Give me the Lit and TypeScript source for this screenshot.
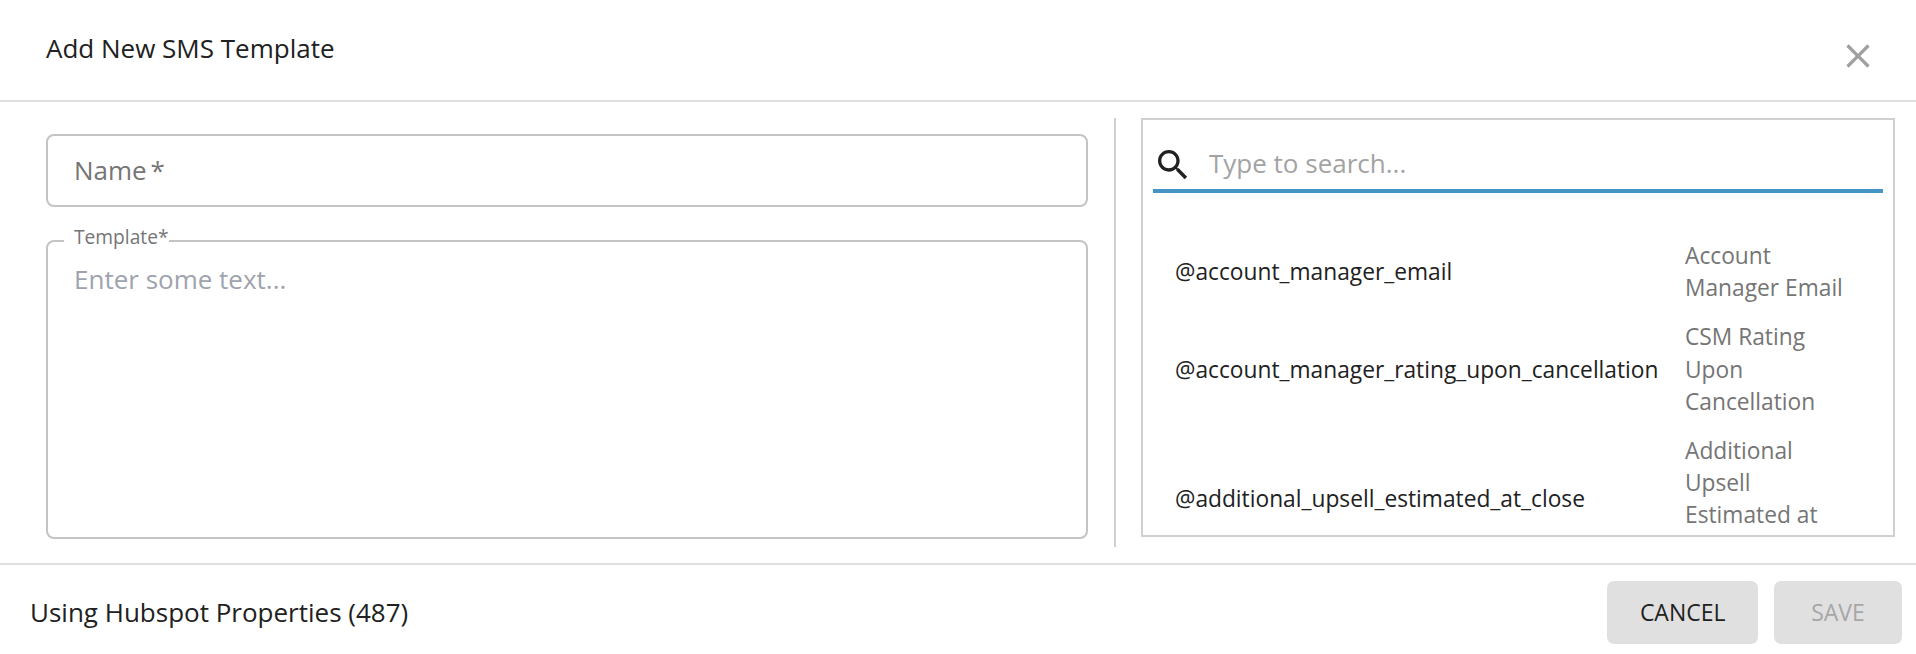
import { LitElement, html, css } from 'lit';
import { customElement } from 'lit/decorators.js';

const PROPERTIES = [
  { token: '@account_manager_email', label: 'Account Manager Email' },
  { token: '@account_manager_rating_upon_cancellation', label: 'CSM Rating Upon Cancellation' },
  { token: '@additional_upsell_estimated_at_close', label: 'Additional Upsell Estimated at Close' },
];

@customElement('app-root')
export class AppRoot extends LitElement {
  static override styles = css`
    :host {
      display: block;
      height: 654px;
      overflow: hidden;
      background: #fff;
      color: #212121;
      font-family: 'Open Sans', sans-serif;
    }

    .header {
      display: flex;
      justify-content: space-between;
      box-sizing: border-box;
      height: 102px;
      padding: 30px 38px 0 46px;
      border-bottom: 2px solid #e0e0e0;
    }

    .title {
      font-size: 26px;
      line-height: 36px;
    }

    .close {
      width: 40px;
      height: 40px;
      margin-top: 6px;
      fill: #a0a0a0;
    }

    .body {
      display: flex;
      box-sizing: border-box;
      height: 461px;
      padding: 16px 21px 0 46px;
    }

    .form {
      display: flex;
      flex-direction: column;
      gap: 19px;
      box-sizing: border-box;
      width: 1070px;
      height: 429px;
      padding: 16px 26px 0 0;
      border-right: 2px solid #d0d0d0;
    }

    .name {
      box-sizing: border-box;
      height: 73px;
      padding: 0 26px;
      border: 2px solid #c4c4c4;
      border-radius: 8px;
      color: #757575;
      font-size: 26px;
      line-height: 69px;
      word-spacing: -3px;
    }

    .template {
      box-sizing: border-box;
      height: 313px;
      margin: 0;
      min-width: 0;
      padding: 6px 26px 0;
      border: 2px solid #c4c4c4;
      border-radius: 8px;
    }

    .template legend {
      margin-left: -10px;
      padding: 0 0 7px 10px;
      color: #757575;
      font-size: 19.2px;
      line-height: 22px;
    }

    .placeholder {
      color: #9ea3ae;
      font-size: 26px;
      line-height: 36px;
    }

    .picker {
      box-sizing: border-box;
      width: 754px;
      height: 419px;
      margin-left: 25px;
      padding: 0 10px;
      overflow: hidden;
      border: 2px solid #d0d0d0;
    }

    .search {
      display: flex;
      align-items: center;
      gap: 16px;
      box-sizing: border-box;
      height: 73px;
      padding-top: 21px;
      border-bottom: 4px solid #4494c4;
    }

    .search svg {
      width: 40px;
      height: 40px;
      fill: #212121;
    }

    .search span {
      margin-bottom: 4px;
      color: #a3a3a3;
      font-size: 26px;
    }

    .rows {
      display: grid;
      grid-template-columns: 510px 170px;
      row-gap: 17px;
      padding: 47px 0 0 22px;
      font-size: 22.75px;
      line-height: 32.2px;
    }

    .token {
      align-self: center;
    }

    .label {
      color: #757575;
    }

    .footer {
      display: flex;
      align-items: center;
      justify-content: space-between;
      box-sizing: border-box;
      height: 91px;
      padding: 6px 14px 0 30px;
      border-top: 2px solid #e0e0e0;
    }

    .count {
      margin-bottom: 2px;
      font-size: 26px;
    }

    .actions {
      display: flex;
      gap: 16px;
    }

    .btn {
      box-sizing: border-box;
      min-width: 128px;
      height: 63px;
      padding: 0 32.5px;
      border-radius: 7px;
      background: #e0e0e0;
      font-size: 23px;
      line-height: 63px;
      text-align: center;
    }

    .btn--disabled {
      color: #a6a6a6;
    }
  `;

  override render() {
    return html`
      <div class="header">
        <div class="title">Add New SMS Template</div>
        <svg class="close" viewBox="0 0 24 24">
          <path d="M19 6.41 17.59 5 12 10.59 6.41 5 5 6.41 10.59 12 5 17.59 6.41 19 12 13.41 17.59 19 19 17.59 13.41 12z"></path>
        </svg>
      </div>
      <div class="body">
        <div class="form">
          <div class="name">Name *</div>
          <fieldset class="template">
            <legend>Template*</legend>
            <div class="placeholder">Enter some text...</div>
          </fieldset>
        </div>
        <div class="picker">
          <div class="search">
            <svg viewBox="0 0 24 24">
              <path d="M15.5 14h-.79l-.28-.27C15.41 12.59 16 11.11 16 9.5 16 5.91 13.09 3 9.5 3S3 5.91 3 9.5 5.91 16 9.5 16c1.61 0 3.09-.59 4.23-1.57l.27.28v.79l5 4.99L20.49 19l-4.99-5zm-6 0C7.01 14 5 11.99 5 9.5S7.01 5 9.5 5 14 7.01 14 9.5 11.99 14 9.5 14z"></path>
            </svg>
            <span>Type to search...</span>
          </div>
          <div class="rows">
            ${PROPERTIES.map(
              (p) => html`
                <div class="token">${p.token}</div>
                <div class="label">${p.label}</div>
              `,
            )}
          </div>
        </div>
      </div>
      <div class="footer">
        <div class="count">Using Hubspot Properties (487)</div>
        <div class="actions">
          <div class="btn">CANCEL</div>
          <div class="btn btn--disabled">SAVE</div>
        </div>
      </div>
    `;
  }
}
